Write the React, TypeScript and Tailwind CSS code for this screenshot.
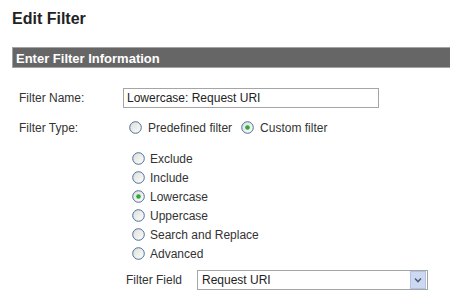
import React from 'react';

function Radio({ checked }: { checked?: boolean }) {
  return (
    <svg width="13" height="13" viewBox="0 0 13 13" className="shrink-0">
      <defs>
        <linearGradient id="rg" x1="0" y1="0" x2="1" y2="1">
          <stop offset="0" stopColor="#dcdcd6" />
          <stop offset="1" stopColor="#ffffff" />
        </linearGradient>
      </defs>
      <circle cx="6.5" cy="6.5" r="5.8" fill="url(#rg)" stroke="#4a6f9c" strokeWidth="1" />
      {checked && <circle cx="6.5" cy="6.5" r="2.3" fill="#2fa83a" />}
    </svg>
  );
}

const filterTypes = ['Exclude', 'Include', 'Lowercase', 'Uppercase', 'Search and Replace', 'Advanced'];

export default function App() {
  return (
    <div className="w-[450px] h-[304px] overflow-hidden bg-white pl-3 pt-[9px] text-[12px] text-[#333] font-['Liberation_Sans',Arial,sans-serif]">
      <h1 className="text-[16px] leading-[20px] font-bold text-[#222]">Edit Filter</h1>

      <div className="mt-[18px] h-[21px] w-[460px] border border-[#a3a3a3] bg-[#666666] pl-[3px] pt-[1px] text-[13px] leading-[19px] font-bold text-white">
        Enter Filter Information
      </div>

      <div className="mt-[20px] flex items-center">
        <div className="w-[111px] pl-[7px]">Filter Name:</div>
        <div className="w-[256px] h-[20px] border border-[#a5a5a5] pl-[3px] leading-[18px] text-[#222]">
          Lowercase: Request URI
        </div>
      </div>

      <div className="mt-[10px] flex h-[19px] items-center">
        <div className="w-[111px] pl-[7px]">Filter Type:</div>
        <div className="flex items-center pl-[6px]">
          <Radio />
          <span className="ml-[6px]">Predefined filter</span>
          <span className="ml-[9px]"><Radio checked /></span>
          <span className="ml-[6px]">Custom filter</span>
        </div>
      </div>

      <div className="mt-[12px] flex flex-col pl-[120px]">
        {filterTypes.map((t) => (
          <div key={t} className="flex h-[19px] items-center">
            <Radio checked={t === 'Lowercase'} />
            <span className="ml-[5px]">{t}</span>
          </div>
        ))}
      </div>

      <div className="mt-[7px] flex items-center pl-[114px]">
        <div className="w-[71px]">Filter Field</div>
        <div className="flex h-[20px] w-[231px] items-center border border-[#a5a5a5] pl-[4px]">
          <span className="flex-1 text-[#222]">Request URI</span>
          <div className="mr-[1px] flex h-[18px] w-[16px] items-center justify-center border border-[#b4c4e0] bg-[#cdd9f0]">
            <svg width="8" height="6" viewBox="0 0 8 6">
              <path d="M1 1.5 L4 4.5 L7 1.5" fill="none" stroke="#4d5f80" strokeWidth="1.6" />
            </svg>
          </div>
        </div>
      </div>
    </div>
  );
}
